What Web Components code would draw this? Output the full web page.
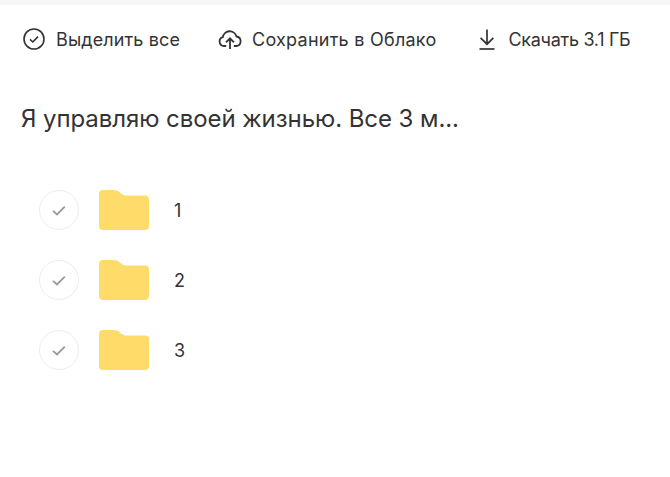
<!DOCTYPE html>
<html lang="ru">
<head>
<meta charset="UTF-8">
<title>Облако</title>
<style>
    html,body{margin:0;background:#fff;}
    body{font-family:Inter,"Noto Sans",sans-serif;color:#333;height:477px;overflow:hidden;}
</style>
</head>
<body>
<disk-page>
    <disk-toolbar>
        <tool-button label="Выделить все" icon="check" spacing=".12px"></tool-button>
        <tool-button label="Сохранить в Облако" icon="cloud" spacing=".25px"></tool-button>
        <tool-button label="Скачать 3.1 ГБ" icon="download" spacing="-.3px"></tool-button>
    </disk-toolbar>
    <disk-title>Я управляю своей жизнью. Все 3 м...</disk-title>
    <folder-list>
        <folder-row>1</folder-row>
        <folder-row>2</folder-row>
        <folder-row>3</folder-row>
    </folder-list>
</disk-page>
<script>
    const icons = {
        check:'<circle cx="12" cy="12" r="10" fill="none" stroke="#333" stroke-width="1.6"/><path d="M8 12.4l2.8 2.6L16 9.6" fill="none" stroke="#333" stroke-width="1.6"/>',
        cloud:'<path d="M7.500 19H6a4.500 4.500 0 0 1-1.200-8.800A7 7 0 0 1 18.500 9.500 4.800 4.800 0 0 1 18.500 19H16.500" fill="none" stroke="#333" stroke-width="1.800" stroke-linecap="round"/><path d="M12 22V11.500M8 15.300L12 11.300l4 4" fill="none" stroke="#333" stroke-width="1.800"/>',
        download:'<path d="M12 2.500V17M5.600 10.800L12 17.200l6.400-6.400" fill="none" stroke="#333" stroke-width="1.700"/><path d="M4.500 22h15" stroke="#333" stroke-width="1.700"/>'
    };

    customElements.define("disk-page",class extends HTMLElement {
        constructor(){
            super();
            this.attachShadow({mode:"open"}).innerHTML = `<style>
                :host{display:block;}
                .strip{height:5px;background:#f6f6f6;}
            </style><div class="strip"></div><slot></slot>`;
        }
    });

    customElements.define("disk-toolbar",class extends HTMLElement {
        constructor(){
            super();
            this.attachShadow({mode:"open"}).innerHTML = `<style>
                :host{display:flex;gap:38px;padding:22px 0 0 22px;height:24px;align-items:center;}
            </style><slot></slot>`;
        }
    });

    customElements.define("tool-button",class extends HTMLElement {
        constructor(){
            super();
            const root = this.attachShadow({mode:"open"});
            root.innerHTML = `<style>
                :host{display:flex;align-items:center;gap:10px;font-size:18px;color:#333;white-space:nowrap;}
                svg{width:24px;height:24px;flex:none;display:block;}
                span{letter-spacing:${this.getAttribute("spacing")};}
            </style><svg viewBox="0 0 24 24">${icons[this.getAttribute("icon")]}</svg><span>${this.getAttribute("label")}</span>`;
        }
    });

    customElements.define("disk-title",class extends HTMLElement {
        constructor(){
            super();
            this.attachShadow({mode:"open"}).innerHTML = `<style>
                :host{display:block;padding:52px 0 0 21px;font-size:24px;letter-spacing:-.07px;line-height:32px;color:#333;white-space:nowrap;}
            </style><slot></slot>`;
        }
    });

    customElements.define("folder-list",class extends HTMLElement {
        constructor(){
            super();
            this.attachShadow({mode:"open"}).innerHTML = `<style>
                :host{display:flex;flex-direction:column;gap:30px;padding:55px 0 0 39px;}
            </style><slot></slot>`;
        }
    });

    customElements.define("folder-row",class extends HTMLElement {
        constructor(){
            super();
            this.attachShadow({mode:"open"}).innerHTML = `<style>
                :host{display:flex;align-items:center;height:40px;font-size:18px;color:#333;}
                .tick{width:38px;height:38px;border:1px solid #ededed;border-radius:50%;display:flex;align-items:center;justify-content:center;flex:none;}
                .tick svg{width:16px;height:16px;display:block;}
                .folder{width:50px;height:40px;margin:0 25px 0 20px;flex:none;display:block;}
            </style>
            <div class="tick"><svg viewBox="0 0 16 16"><path d="M2 8.800l4 3.700 7.800-7.800" fill="none" stroke="#999" stroke-width="1.800"/></svg></div>
            <svg class="folder" viewBox="0 0 50 40"><path d="M0 4a4 4 0 0 1 4-4h10c3.500 0 5.500 1.200 7.500 3 1.800 1.600 3 2.500 5.500 2.500H46a4 4 0 0 1 4 4V36a4 4 0 0 1-4 4H4a4 4 0 0 1-4-4z" fill="#ffdb69"/></svg>
            <span><slot></slot></span>`;
        }
    });
</script>
</body>
</html>
